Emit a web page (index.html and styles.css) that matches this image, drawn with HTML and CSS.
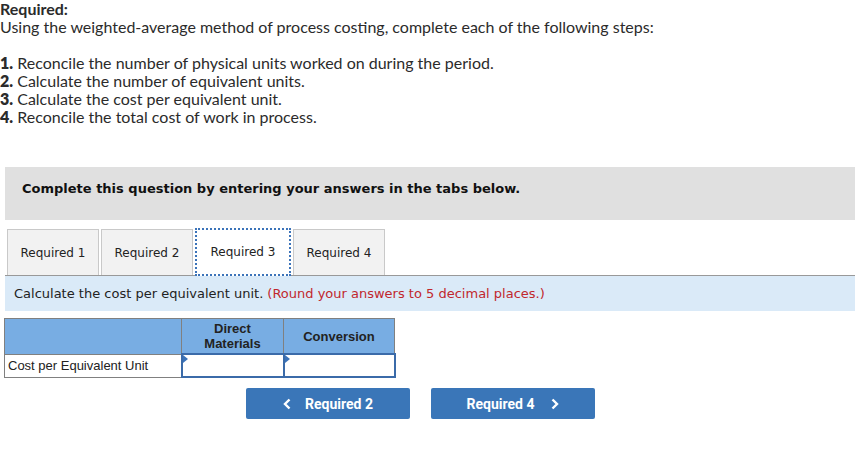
FILE: index.html
```html
<!DOCTYPE html>
<html>
<head>
<meta charset="utf-8">
<link rel="stylesheet" href="styles.css">
</head>
<body>
<div class="intro">
  <div class="req-title">Required:</div>
  <div>Using the weighted-average method of process costing, complete each of the following steps:</div>
  <div class="steps">
    <div><b>1.</b> Reconcile the number of physical units worked on during the period.</div>
    <div><b>2.</b> Calculate the number of equivalent units.</div>
    <div><b>3.</b> Calculate the cost per equivalent unit.</div>
    <div><b>4.</b> Reconcile the total cost of work in process.</div>
  </div>
</div>
<div class="panel">
  <div class="banner">Complete this question by entering your answers in the tabs below.</div>
  <div class="tabs">
    <div class="tab">Required 1</div>
    <div class="tab">Required 2</div>
    <div class="tab active">Required 3</div>
    <div class="tab">Required 4</div>
  </div>
  <div class="instruction">Calculate the cost per equivalent unit. <span class="note">(Round your answers to 5 decimal places.)</span></div>
  <table class="grid">
    <tr class="head">
      <th class="c1"></th>
      <th class="c2">Direct<br>Materials</th>
      <th class="c3">Conversion</th>
    </tr>
    <tr>
      <td class="label">Cost per Equivalent Unit</td>
      <td class="input"><span class="flag"></span></td>
      <td class="input"><span class="flag"></span></td>
    </tr>
  </table>
  <div class="nav">
    <div class="btn"><svg class="chev left" width="8" height="12" viewBox="0 0 8 12"><path d="M6.5 1.5 L2 6 L6.5 10.5" fill="none" stroke="#fff" stroke-width="2.4"/></svg>Required 2</div>
    <div class="btn">Required 4<svg class="chev right" width="8" height="12" viewBox="0 0 8 12"><path d="M1.5 1.5 L6 6 L1.5 10.5" fill="none" stroke="#fff" stroke-width="2.4"/></svg></div>
  </div>
</div>
</body>
</html>
```
FILE: styles.css
```css
body {
  margin: 0;
  background: #fff;
  color: #222;
}
.intro {
  font-family: Lato, "Open Sans", sans-serif;
  font-size: 16px;
  line-height: 18px;
  color: #2b2b2b;
  padding-top: 0;
}
.req-title {
  font-weight: bold;
}
.steps {
  margin-top: 18px;
}
.steps b {
  font-weight: 800;
}
.panel {
  margin: 41px 12px 0 5px;
  width: 850px;
}
.banner {
  background: #e0e0e0;
  height: 53px;
  box-sizing: border-box;
  padding: 0 0 9px 17px;
  font-family: "DejaVu Sans", Verdana, sans-serif;
  font-weight: bold;
  font-size: 13px;
  line-height: 18px;
  color: #111;
  display: flex;
  align-items: center;
}
.tabs {
  display: flex;
  margin-top: 9px;
  padding-left: 2px;
  gap: 2px;
  border-bottom: 1px solid #999;
  height: 46px;
}
.tab {
  width: 92px;
  height: 46px;
  box-sizing: border-box;
  background: #f2f2f2;
  border: 1px solid #c9c9c9;
  border-bottom: none;
  display: flex;
  align-items: center;
  justify-content: center;
  font-family: "DejaVu Sans", Verdana, sans-serif;
  font-size: 12px;
  color: #222;
}
.tab.active {
  width: 96px;
  background: #fff;
  border: 2px dotted #3b73b9;
  height: 48px;
  margin-top: -1px;
  position: relative;
  z-index: 1;
}
.instruction {
  background: #daeaf8;
  height: 35px;
  box-sizing: border-box;
  padding: 0 0 0 9px;
  display: flex;
  align-items: center;
  font-family: "DejaVu Sans", Verdana, sans-serif;
  font-size: 13px;
  color: #222;
}
.note {
  color: #c1272d;
  margin-left: 4px;
}
.grid {
  border-collapse: collapse;
  margin: 7px 0 0 -1px;
  font-family: "Liberation Sans", Arial, sans-serif;
  font-size: 13px;
}
.grid th, .grid td {
  border: 1px solid #808080;
  padding: 0;
}
.head th {
  background: #78ade3;
  color: #222;
  font-weight: bold;
  height: 34px;
  line-height: 15px;
}
.c1 { width: 176px; }
.c2 { width: 101px; }
.c3 { width: 110px; }
.label {
  height: 22px;
  padding-left: 3px !important;
  color: #222;
}
.grid td.input {
  border: 2px solid #3b6ba9;
  position: relative;
  background: #fff;
}
.flag {
  position: absolute;
  left: 0;
  top: 0;
  width: 0;
  height: 0;
  border-top: 4px solid transparent;
  border-bottom: 4px solid transparent;
  border-left: 5px solid #3b73b9;
}
.nav {
  display: flex;
  gap: 21px;
  margin: 10px 0 0 241px;
}
.btn {
  width: 164px;
  height: 31px;
  background: #3a76b8;
  border-radius: 2px;
  color: #fff;
  font-family: Roboto, "Liberation Sans", sans-serif;
  font-weight: bold;
  font-size: 14px;
  display: flex;
  align-items: center;
  justify-content: center;
}
.chev.left {
  margin-right: 14px;
}
.chev.right {
  margin-left: 17px;
}
```
